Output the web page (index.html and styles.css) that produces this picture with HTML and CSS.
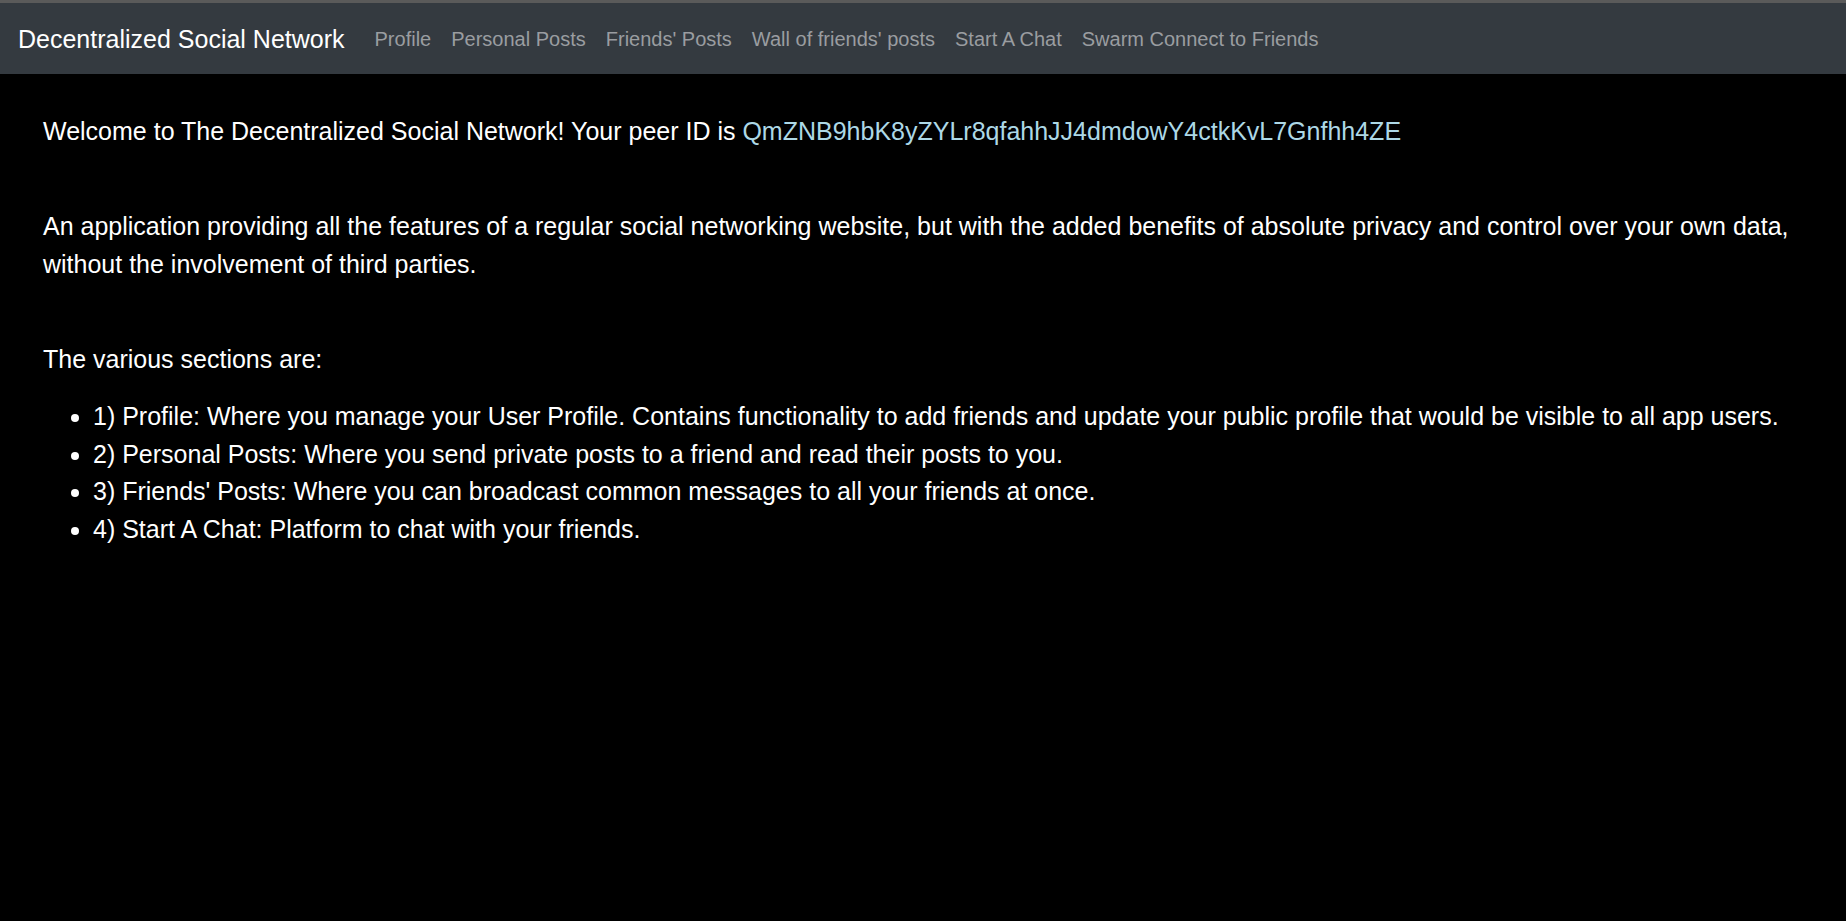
FILE: index.html
```html
<!DOCTYPE html>
<html lang="en">
<head>
<meta charset="utf-8">
<title>Decentralized Social Network</title>
<link rel="stylesheet" href="styles.css">
</head>
<body>
<div class="topline"></div>
<nav class="navbar">
  <a class="brand" href="#">Decentralized Social Network</a>
  <ul class="nav-links">
    <li><a href="#">Profile</a></li>
    <li><a href="#">Personal Posts</a></li>
    <li><a href="#">Friends' Posts</a></li>
    <li><a href="#">Wall of friends' posts</a></li>
    <li><a href="#">Start A Chat</a></li>
    <li><a href="#">Swarm Connect to Friends</a></li>
  </ul>
</nav>
<main class="content">
  <p>Welcome to The Decentralized Social Network! Your peer ID is <span class="peer-id">QmZNB9hbK8yZYLr8qfahhJJ4dmdowY4ctkKvL7Gnfhh4ZE</span></p>
  <br>
  <p>An application providing all the features of a regular social networking website, but with the added benefits of absolute privacy and control over your own data, without the involvement of third parties.</p>
  <br>
  <p>The various sections are:</p>
  <ul class="sections">
    <li>1) Profile: Where you manage your User Profile. Contains functionality to add friends and update your public profile that would be visible to all app users.</li>
    <li>2) Personal Posts: Where you send private posts to a friend and read their posts to you.</li>
    <li>3) Friends' Posts: Where you can broadcast common messages to all your friends at once.</li>
    <li>4) Start A Chat: Platform to chat with your friends.</li>
  </ul>
</main>
</body>
</html>
```
FILE: styles.css
```css
html, body {
  margin: 0;
  padding: 0;
  background: #000;
  color: #fff;
  font-family: "Liberation Sans", Arial, sans-serif;
  min-height: 100%;
}

.topline {
  height: 3px;
  background: #5a5a5a;
}

.navbar {
  height: 71px;
  background: #343a40;
  display: flex;
  align-items: center;
  padding: 1px 0 0 18px;
  box-sizing: border-box;
}

.brand {
  color: #fff;
  text-decoration: none;
  font-size: 25px;
  margin-right: 20px;
  white-space: nowrap;
}

.nav-links {
  list-style: none;
  display: flex;
  margin: 0;
  padding: 0;
}

.nav-links a {
  display: block;
  padding: 0 10px;
  color: #9a9da0;
  text-decoration: none;
  font-size: 20px;
  white-space: nowrap;
}

.content {
  padding: 39px 42px 0 43px;
  font-size: 25px;
  line-height: 37.5px;
}

.content p {
  margin: 0 0 20px 0;
}

.peer-id {
  color: #add8e6;
}

.sections {
  margin: 0;
  padding-left: 50px;
}
```
